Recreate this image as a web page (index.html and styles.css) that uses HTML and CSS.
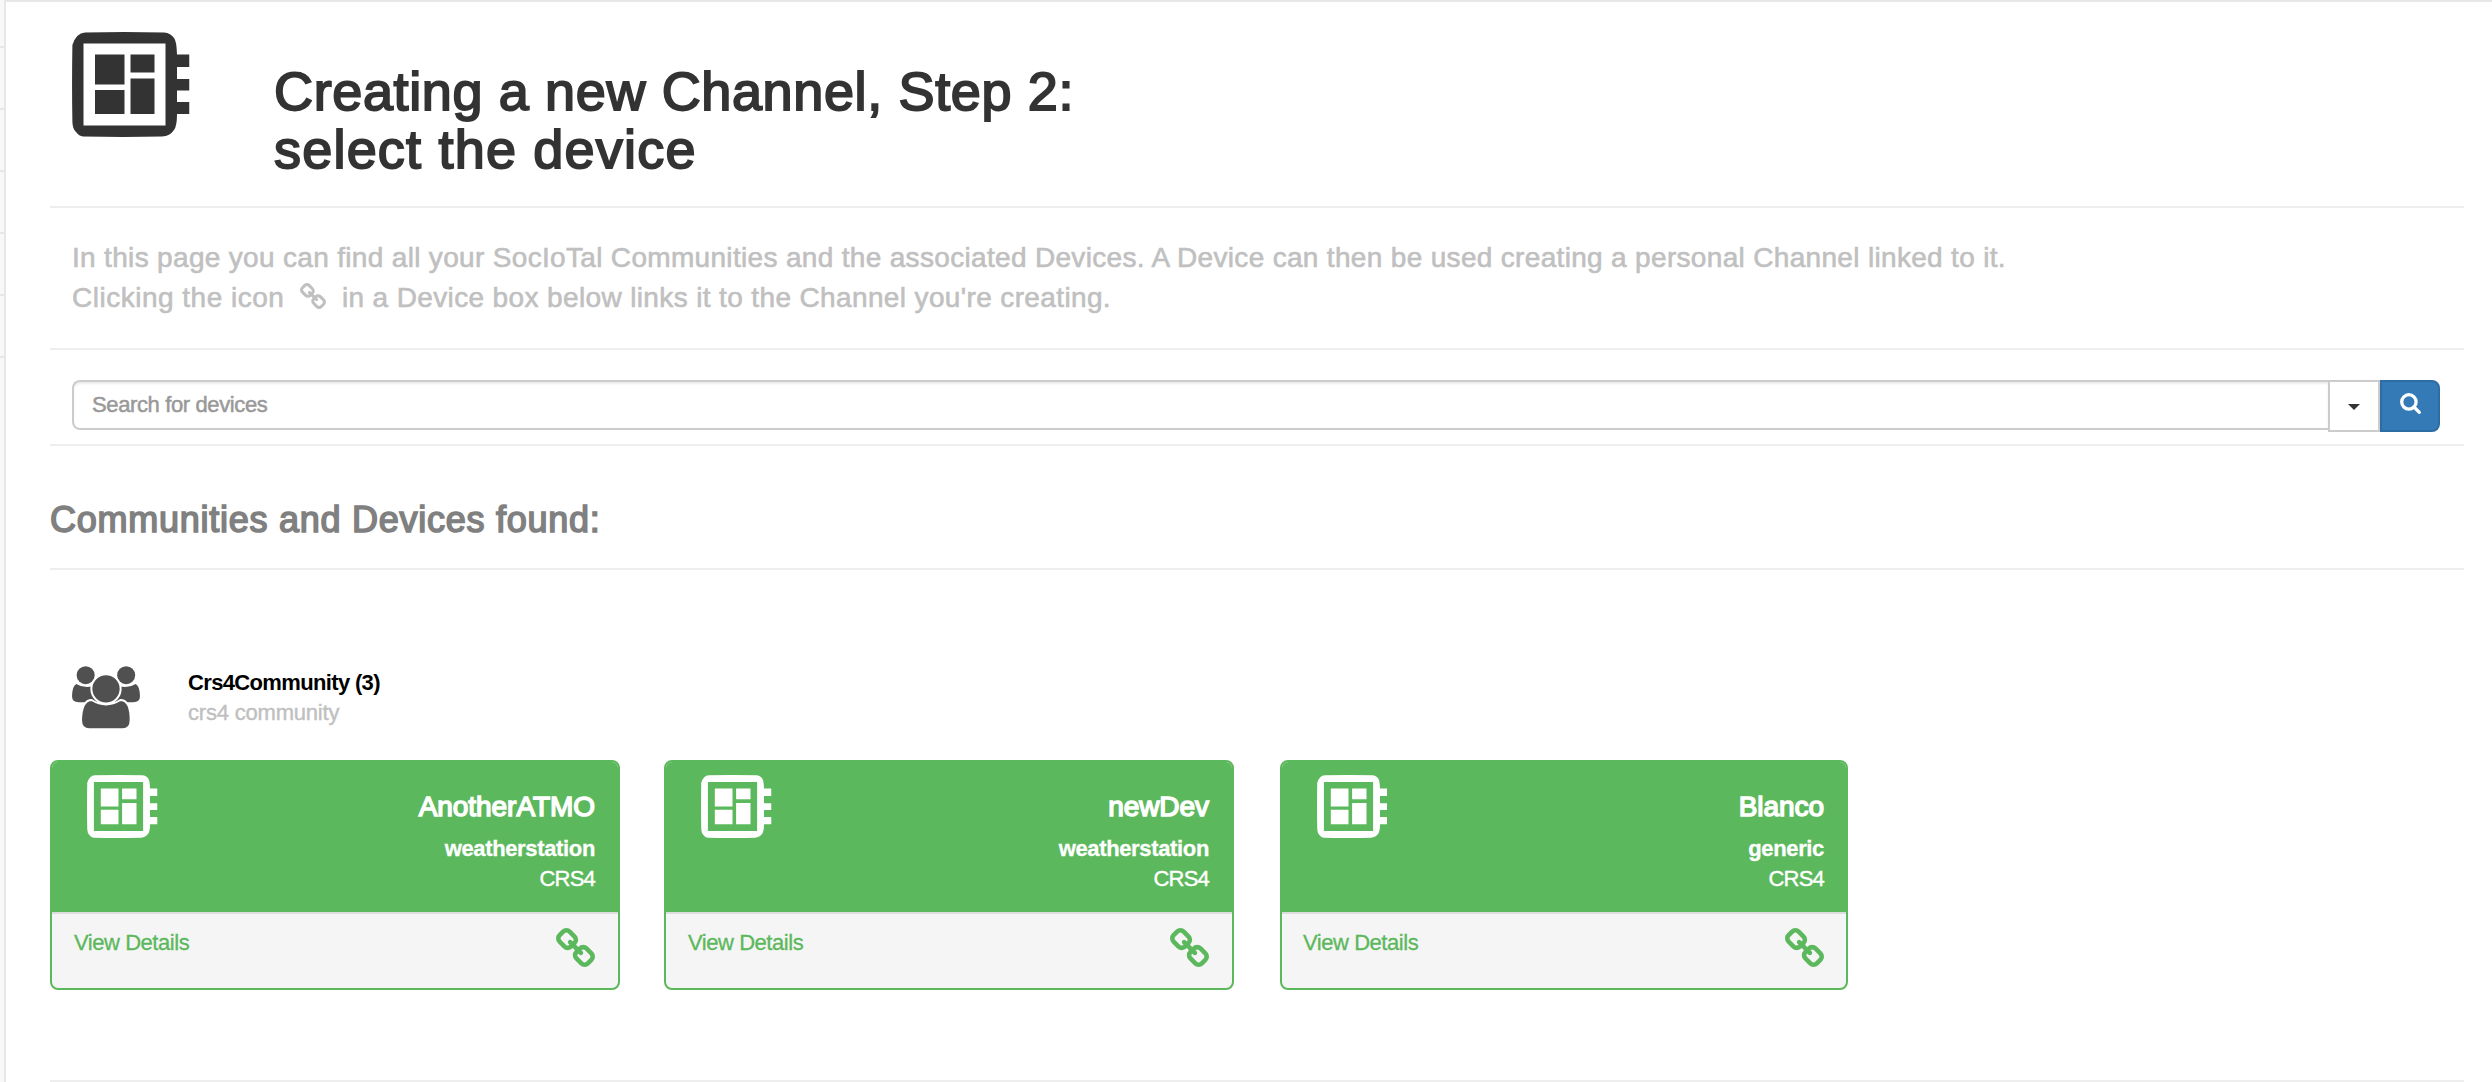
FILE: index.html
```html
<!DOCTYPE html>
<html lang="en">
<head>
<meta charset="utf-8">
<title>Creating a new Channel</title>
<link rel="stylesheet" href="styles.css">
</head>
<body>
<svg class="defs" aria-hidden="true">
  <symbol id="board" viewBox="0 0 117.5 105">
    <path fill-rule="evenodd" d="M13 .4Q52-.4 92 .4Q99 1 102 6Q104.600 9 105 22.500H117.500V35H105V47H117.500V58.500H105V70H117.500V82H105Q105 94 102 98Q98 104 90 104.600Q52 105.400 11 104.600Q7 104 4 100Q.6 97 .4 90Q-.3 52 .4 13Q4 1 13 .4ZM11.500 11.500V93.500H93.500V11.500Z"/>
    <path d="M23 22.500H52.500V52.500H23ZM23 58H52.500V82H23ZM58.500 22.500H82.500V40.500H58.500ZM58.500 46.500H82.500V82H58.500Z"/>
  </symbol>
  <symbol id="link" viewBox="80 16 1632 1632">
    <path d="M1520 1216q0-40-28-68l-208-208q-28-28-68-28-42 0-72 32 3 3 19 18.500t21.500 21.500 15 19 13 25.500 3.500 27.500q0 40-28 68t-68 28q-15 0-27.500-3.500t-25.500-13-19-15-21.500-21.500-18.500-19q-33 31-33 73 0 40 28 68l206 207q27 27 68 27 40 0 68-26l147-146q28-28 28-67zm-703-705q0-40-28-68l-206-207q-28-28-68-28-39 0-68 27l-147 146q-28 28-28 67 0 40 28 68l208 208q27 27 68 27 42 0 72-31-3-3-19-18.500t-21.500-21.500-15-19-13-25.500-3.500-27.500q0-40 28-68t68-28q15 0 27.500 3.500t25.500 13 19 15 21.500 21.500 18.500 19q33-31 33-73zm895 705q0 120-85 203l-147 146q-83 83-203 83-121 0-204-85l-206-207q-83-83-83-203 0-123 88-209l-88-88q-86 88-208 88-120 0-204-84l-208-208q-84-84-84-204t85-203l147-146q83-83 203-83 121 0 204 85l206 207q83 83 83 203 0 123-88 209l88 88q86-88 208-88 120 0 204 84l208 208q84 84 84 204z"/>
  </symbol>
</svg>
<div class="app">
  <aside class="sidebar"><i></i><i></i><i></i><i></i><i></i><i></i></aside>
  <main class="page">
    <header class="head">
      <svg class="board-lg"><use href="#board"/></svg>
      <h1>Creating a new Channel, Step 2:<br><span class="second">select the device</span></h1>
    </header>
    <section class="intro">
      In this page you can find all your SocIoTal Communities and the associated Devices. A Device can then be used creating a personal Channel linked to it.<br>
      <span class="clicking">Clicking the icon</span><svg class="link-sm"><use href="#link"/></svg><span class="rest">in a Device box below links it to the Channel you're creating.</span>
    </section>
    <section class="search">
      <div class="field">Search for devices</div>
      <div class="drop"><b class="caret"></b></div>
      <div class="go"><svg viewBox="0 0 22 22"><circle cx="8.900" cy="8.900" r="7.200"/><path d="M14 14L19.300 19.300"/></svg></div>
    </section>
    <h2 class="found">Communities and Devices found:</h2>
    <section class="results">
      <div class="community">
        <svg class="users" viewBox="37 47 204 190">
          <g class="side"><path d="M37 138Q38 106 50 101Q76 118 112 104V156H57Q37 156 37 138Z"/><path d="M241 138Q240 106 228 101Q202 118 166 104V156H221Q241 156 241 138Z"/></g>
          <circle cx="78" cy="74.500" r="27"/><circle cx="199.500" cy="74.500" r="27"/>
          <path class="cut" d="M96 149Q139 176 182 149Q213 149 213 209Q213 237 189 237H89Q64 237 64 209Q66 149 96 149Z"/>
          <circle class="cut" cx="139" cy="115.500" r="44"/>
        </svg>
        <div><div class="cname">Crs4Community (3)</div><div class="cdesc">crs4 community</div></div>
      </div>
      <div class="cards">
        <article class="card">
          <div class="top"><svg class="board-sm"><use href="#board"/></svg><div class="info"><h3>AnotherATMO</h3><b>weatherstation</b><p>CRS4</p></div></div>
          <div class="foot"><a>View Details</a><svg><use href="#link"/></svg></div>
        </article>
        <article class="card">
          <div class="top"><svg class="board-sm"><use href="#board"/></svg><div class="info"><h3>newDev</h3><b>weatherstation</b><p>CRS4</p></div></div>
          <div class="foot"><a>View Details</a><svg><use href="#link"/></svg></div>
        </article>
        <article class="card">
          <div class="top"><svg class="board-sm"><use href="#board"/></svg><div class="info"><h3>Blanco</h3><b>generic</b><p>CRS4</p></div></div>
          <div class="foot"><a>View Details</a><svg><use href="#link"/></svg></div>
        </article>
      </div>
    </section>
  </main>
</div>
</body>
</html>
```
FILE: styles.css
```css
* { box-sizing: border-box; margin: 0; padding: 0; }
body { background: #fff; font-family: "Liberation Sans", Arial, sans-serif; font-size: 22px; color: #333; overflow: hidden; }
svg { display: block; fill: currentColor; }
.defs { display: none; }
.app { display: flex; height: 1082px; }
.sidebar { width: 4px; background: #f8f8f8; padding-top: 46px; display: flex; flex-direction: column; gap: 60px; }
.sidebar i { display: block; height: 2px; background: #e7e7e7; }
.page { flex: 1; border-left: 2px solid #e7e7e7; border-top: 2px solid #e7e7e7; padding: 0 28px 0 44px; }
.head { height: 206px; border-bottom: 2px solid #eee; display: flex; padding-left: 22px; }
.board-lg { width: 117.500px; height: 105px; margin: 29.500px 82px 0 0; }
h1 { font-size: 54px; line-height: 58px; font-weight: 400; padding: 59.500px 0 0 2.500px; letter-spacing: .630px; -webkit-text-stroke: 1.900px currentColor; }
.second { letter-spacing: 1.200px; }
.intro { height: 142px; border-bottom: 2px solid #eee; padding: 30px 0 0 22px; font-size: 28px; line-height: 40px; color: #c0c0c0; letter-spacing: .325px; -webkit-text-stroke: .6px currentColor; white-space: nowrap; }
.clicking { letter-spacing: .500px; }
.rest { letter-spacing: .370px; }
.link-sm { display: inline-block; width: 26px; height: 26px; margin: 0 16px 0 15.500px; vertical-align: -2px; }
.search { height: 96px; border-bottom: 2px solid #eee; padding: 30px 24px 0 22px; display: flex; align-items: flex-start; }
.field { flex: 1; height: 50px; border: 2px solid #ccc; border-right: 0; border-radius: 8px 0 0 8px; box-shadow: inset 0 2px 2px rgba(0,0,0,.075); padding-left: 18px; line-height: 45px; color: #999; letter-spacing: -.380px; -webkit-text-stroke: .5px currentColor; }
.drop { width: 52px; height: 52px; border: 2px solid #ccc; display: flex; justify-content: center; padding-top: 22px; }
.caret { width: 12px; height: 6px; background: #333; clip-path: polygon(0 0, 100% 0, 50% 100%); }
.go { width: 60px; height: 52px; border: 2px solid #2e6da4; border-radius: 0 8px 8px 0; background: #337ab7; color: #fff; padding: 10.500px 0 0 17.500px; }
.go svg { width: 22px; height: 22px; fill: none; stroke: #fff; stroke-width: 3.300; stroke-linecap: round; }
.found { height: 124px; border-bottom: 2px solid #eee; padding-top: 54px; font-size: 36px; line-height: 40px; font-weight: 400; color: #808080; letter-spacing: .740px; -webkit-text-stroke: 1.600px currentColor; }
.results { height: 512px; border-bottom: 2px solid #eee; padding-top: 96px; }
.community { display: flex; height: 94px; padding-left: 22px; color: #000; line-height: 30px; }
.users { width: 68px; height: 63.300px; margin-right: 48px; fill: #505050; }
.users .cut { stroke: #fff; stroke-width: 6; }
.users .side + circle, .users .side + circle + circle { stroke: #fff; stroke-width: 5; paint-order: stroke; }
.cname { padding-top: 2px; font-weight: 700; letter-spacing: -.650px; }
.cdesc { color: #c0c0c0; letter-spacing: -.200px; -webkit-text-stroke: .4px currentColor; }
.cards { display: flex; gap: 44px; }
.card { width: 570px; height: 230px; border: 2px solid #5cb85c; border-radius: 8px; background: #f5f5f5; overflow: hidden; }
.card:last-child { width: 568px; margin-left: 2px; }
.top { height: 150px; background: #5cb85c; color: #fff; display: flex; justify-content: space-between; padding: 13px 23px 0 35px; }
.card:last-child .top { padding: 13px 22px 0 34.500px; }
.board-sm { width: 70.500px; height: 63px; }
.info { text-align: right; line-height: 30px; padding-top: 13px; }
.info h3 { font-size: 28px; line-height: 38px; font-weight: 400; letter-spacing: -.050px; -webkit-text-stroke: 1.500px currentColor; }
.info b { display: block; margin-top: 8px; letter-spacing: -.350px; -webkit-text-stroke: .3px currentColor; }
.info p { letter-spacing: -.800px; -webkit-text-stroke: .4px currentColor; }
.foot { border-top: 2px solid #ddd; height: 76px; padding: 14px 23px 0 22px; display: flex; justify-content: space-between; color: #5cb85c; line-height: 30px; letter-spacing: -.450px; -webkit-text-stroke: .3px currentColor; }
.card:last-child .foot { padding: 14px 22px 0 21px; }
.foot svg { width: 39px; height: 39px; }
```
